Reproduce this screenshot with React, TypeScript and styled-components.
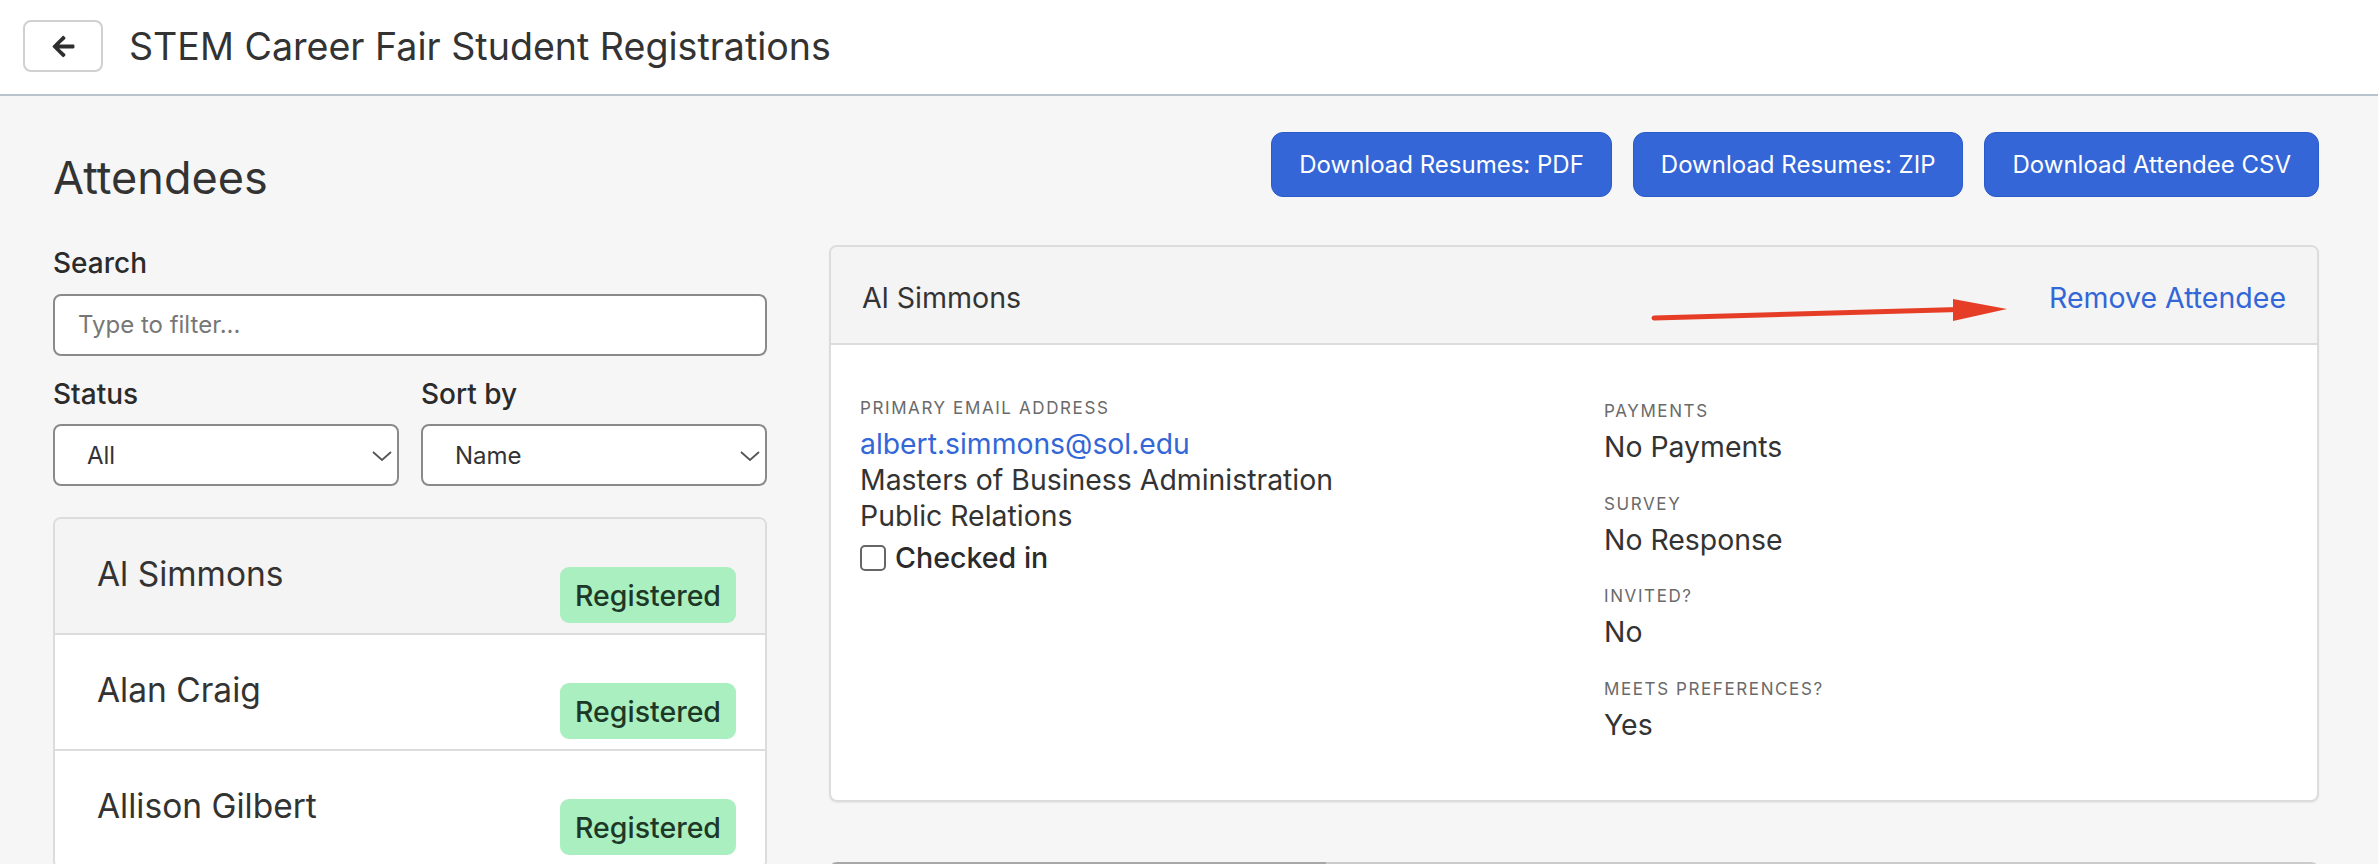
import React from "react";
import styled, { createGlobalStyle } from "styled-components";
import { FaArrowLeft } from "react-icons/fa";

const GlobalStyle = createGlobalStyle`
  html, body {
    margin: 0;
    padding: 0;
    overflow: hidden;
    background: #f6f6f6;
    font-family: Inter, "Liberation Sans", Arial, sans-serif;
    color: #333;
  }
  * {
    box-sizing: border-box;
  }
`;

const TopBar = styled.header`
  display: flex;
  align-items: center;
  gap: 26px;
  height: 96px;
  padding: 0 23px 2px;
  background: #fff;
  border-bottom: 2px solid #b8c3cc;
`;

const BackButton = styled.button`
  display: flex;
  align-items: center;
  justify-content: center;
  width: 80px;
  height: 52px;
  padding: 0;
  background: #fff;
  border: 2px solid #d0d0d0;
  border-radius: 8px;
  color: #2e2e2e;
  cursor: pointer;
`;

const PageTitle = styled.h1`
  margin: 0;
  font-size: 37.6px;
  font-weight: 400;
  color: #333;
`;

const Main = styled.main`
  display: grid;
  grid-template-columns: 714px 1fr;
  column-gap: 62px;
  padding: 36px 59px 0 53px;
`;

const Sidebar = styled.section`
  display: flex;
  flex-direction: column;
`;

const Heading = styled.h2`
  margin: 19px 0 42px;
  font-size: 45px;
  line-height: 1.2;
  font-weight: 400;
  color: #333;
`;

const FieldLabel = styled.label`
  display: block;
  margin-bottom: 13px;
  font-size: 28px;
  line-height: 1.2;
  font-weight: 500;
  color: #2b2b2b;
`;

const TextInput = styled.input`
  width: 100%;
  height: 62px;
  padding: 0 23px;
  font-family: inherit;
  font-size: 24px;
  color: #333;
  background: #fff;
  border: 2px solid #8a8a8a;
  border-radius: 8px;
  outline: none;
  &::placeholder {
    color: #777;
  }
`;

const FilterRow = styled.div`
  display: grid;
  grid-template-columns: 1fr 1fr;
  column-gap: 22px;
  margin-top: 22px;
`;

const SelectWrap = styled.div`
  position: relative;
`;

const Select = styled.select`
  width: 100%;
  height: 62px;
  padding: 0 40px 0 32px;
  font-family: inherit;
  font-size: 24px;
  color: #333;
  background: #fff;
  border: 2px solid #8a8a8a;
  border-radius: 8px;
  appearance: none;
  outline: none;
`;

const Chevron = styled.svg`
  position: absolute;
  right: 7px;
  top: 27px;
  pointer-events: none;
`;

const ListCard = styled.div`
  margin-top: 31px;
  background: #fff;
  border: 2px solid #dcdcdc;
  border-radius: 8px;
  overflow: hidden;
`;

const ListRow = styled.div<{ $active?: boolean }>`
  display: flex;
  justify-content: space-between;
  height: 116px;
  padding: 35px 29px 10px 42px;
  background: ${(p) => (p.$active ? "#f4f4f4" : "#fff")};
  border-bottom: 2px solid #dcdcdc;
`;

const RowName = styled.div`
  align-self: flex-start;
  font-size: 33.5px;
  line-height: 1.2;
  color: #333;
`;

const Badge = styled.span`
  align-self: flex-end;
  display: inline-flex;
  align-items: center;
  height: 56px;
  padding: 0 15px;
  font-size: 28.5px;
  font-weight: 500;
  color: #1e3827;
  background: #a9efc0;
  border-radius: 9px;
`;

const Content = styled.section`
  display: flex;
  flex-direction: column;
`;

const ButtonRow = styled.div`
  display: flex;
  justify-content: flex-end;
  gap: 21px;
`;

const PrimaryButton = styled.button`
  height: 65px;
  padding: 0 27px;
  font-family: inherit;
  font-size: 24px;
  color: #fff;
  background: #3466d7;
  border: 1px solid #2b5bc9;
  border-radius: 12px;
  cursor: pointer;
`;

const Card = styled.div`
  margin-top: 48px;
  background: #fff;
  border: 2px solid #dcdcdc;
  border-radius: 8px;
  box-shadow: 0 1px 2px rgba(0, 0, 0, 0.06);
  overflow: hidden;
`;

const CardHeader = styled.div`
  position: relative;
  display: flex;
  align-items: center;
  justify-content: space-between;
  height: 98px;
  padding: 4px 31px 0 31px;
  background: #f4f4f4;
  border-bottom: 2px solid #dcdcdc;
`;

const CardTitle = styled.div`
  font-size: 28.6px;
  color: #333;
`;

const LinkButton = styled.a`
  font-size: 28.5px;
  color: #3366d6;
  text-decoration: none;
  cursor: pointer;
`;

const Annotation = styled.svg`
  position: absolute;
  left: 818px;
  top: 46px;
  pointer-events: none;
`;

const CardBody = styled.div`
  display: grid;
  grid-template-columns: 744px 1fr;
  padding: 53px 29px 57px;
`;

const InfoColumn = styled.div<{ $offset?: number }>`
  display: flex;
  flex-direction: column;
  padding-top: ${(p) => p.$offset ?? 0}px;
`;

const InfoLabel = styled.div`
  font-size: 17px;
  line-height: 20px;
  letter-spacing: 1.6px;
  text-transform: uppercase;
  color: #6a6a6a;
  margin-bottom: 8px;
`;

const InfoValue = styled.div`
  font-size: 28.4px;
  line-height: 36px;
  color: #333;
`;

const InfoGroup = styled.div`
  margin-bottom: 28.5px;
  &:last-child {
    margin-bottom: 0;
  }
`;

const EmailLink = styled.a`
  font-size: 28.3px;
  line-height: 36px;
  color: #3366d6;
  text-decoration: none;
`;

const CheckRow = styled.label`
  display: flex;
  align-items: center;
  gap: 9px;
  margin-top: 6px;
  font-size: 28.6px;
  line-height: 36px;
  font-weight: 500;
  color: #2b2b2b;
`;

const CheckBox = styled.input`
  appearance: none;
  width: 26px;
  height: 26px;
  margin: 0;
  border: 2px solid #666;
  border-radius: 5px;
  background: #fff;
`;

const NextCard = styled.div`
  display: grid;
  grid-template-columns: 1fr 2fr;
  margin-top: 60px;
  height: 60px;
  background: #fff;
  border-radius: 8px 8px 0 0;
  overflow: hidden;
`;

const Strip = styled.div<{ $dark?: boolean }>`
  height: 4px;
  background: ${(p) => (p.$dark ? "#a8a8a8" : "#cbcbcb")};
`;

const attendees = [
  { name: "Al Simmons", status: "Registered", active: true },
  { name: "Alan Craig", status: "Registered" },
  { name: "Allison Gilbert", status: "Registered" },
];

const details = [
  { label: "Payments", value: "No Payments" },
  { label: "Survey", value: "No Response" },
  { label: "Invited?", value: "No" },
  { label: "Meets Preferences?", value: "Yes" },
];

const ChevronDown = () => (
  <Chevron width="20" height="10" viewBox="0 0 20 10">
    <path d="M1 1 L10 9 L19 1" fill="none" stroke="#555" strokeWidth="1.8" />
  </Chevron>
);

export default function App() {
  return (
    <>
      <GlobalStyle />
      <TopBar>
        <BackButton aria-label="Back">
          <FaArrowLeft size={25} />
        </BackButton>
        <PageTitle>STEM Career Fair Student Registrations</PageTitle>
      </TopBar>
      <Main>
        <Sidebar>
          <Heading>Attendees</Heading>
          <FieldLabel>Search</FieldLabel>
          <TextInput placeholder="Type to filter..." />
          <FilterRow>
            <div>
              <FieldLabel>Status</FieldLabel>
              <SelectWrap>
                <Select defaultValue="All">
                  <option>All</option>
                  <option>Registered</option>
                </Select>
                <ChevronDown />
              </SelectWrap>
            </div>
            <div>
              <FieldLabel>Sort by</FieldLabel>
              <SelectWrap>
                <Select defaultValue="Name">
                  <option>Name</option>
                  <option>Status</option>
                </Select>
                <ChevronDown />
              </SelectWrap>
            </div>
          </FilterRow>
          <ListCard>
            {attendees.map((a) => (
              <ListRow key={a.name} $active={a.active}>
                <RowName>{a.name}</RowName>
                <Badge>{a.status}</Badge>
              </ListRow>
            ))}
          </ListCard>
        </Sidebar>
        <Content>
          <ButtonRow>
            <PrimaryButton>Download Resumes: PDF</PrimaryButton>
            <PrimaryButton>Download Resumes: ZIP</PrimaryButton>
            <PrimaryButton>Download Attendee CSV</PrimaryButton>
          </ButtonRow>
          <Card>
            <CardHeader>
              <CardTitle>Al Simmons</CardTitle>
              <LinkButton>Remove Attendee</LinkButton>
              <Annotation width="362" height="34" viewBox="0 0 362 34">
                <line x1="5" y1="25" x2="310" y2="16.5" stroke="#e63e26" strokeWidth="5" strokeLinecap="round" />
                <polygon points="304,6 358,16 304,28" fill="#e63e26" />
              </Annotation>
            </CardHeader>
            <CardBody>
              <InfoColumn>
                <InfoLabel>Primary Email Address</InfoLabel>
                <EmailLink>albert.simmons@sol.edu</EmailLink>
                <InfoValue>Masters of Business Administration</InfoValue>
                <InfoValue>Public Relations</InfoValue>
                <CheckRow>
                  <CheckBox type="checkbox" />
                  Checked in
                </CheckRow>
              </InfoColumn>
              <InfoColumn $offset={3}>
                {details.map((d) => (
                  <InfoGroup key={d.label}>
                    <InfoLabel>{d.label}</InfoLabel>
                    <InfoValue>{d.value}</InfoValue>
                  </InfoGroup>
                ))}
              </InfoColumn>
            </CardBody>
          </Card>
          <NextCard>
            <Strip $dark />
            <Strip />
          </NextCard>
        </Content>
      </Main>
    </>
  );
}
